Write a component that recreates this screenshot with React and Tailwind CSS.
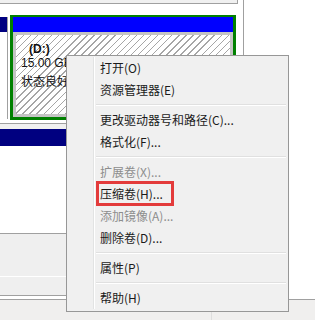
// Disk management view with the volume context menu open

const MENU = [
  { label: '打开(O)' },
  { label: '资源管理器(E)' },
  { sep: true },
  { label: '更改驱动器号和路径(C)...' },
  { label: '格式化(F)...' },
  { sep: true },
  { label: '扩展卷(X)...', disabled: true },
  { label: '压缩卷(H)...', marked: true },
  { label: '添加镜像(A)...', disabled: true },
  { label: '删除卷(D)...' },
  { sep: true },
  { label: '属性(P)' },
  { sep: true },
  { label: '帮助(H)' },
]

function MenuItem({ item }) {
  if (item.sep) {
    return (
      <div className="flex h-[8px]">
        <div className="w-[27px] h-full border-r border-[#e2e3e3] shadow-[1px_0_0_#ffffff]" />
        <div className="flex-1 ml-[2px] mr-[2px] mt-[3px] h-[2px] border-t border-[#e0e0e0] border-b border-b-white" />
      </div>
    )
  }
  return (
    <div className="relative flex h-[22px] items-center">
      <div className="w-[27px] h-full border-r border-[#e2e3e3] shadow-[1px_0_0_#ffffff]" />
      <span className={`pl-[6px] leading-[22px] whitespace-nowrap ${item.disabled ? 'text-[#8d8d8d]' : 'text-[#1b1b1b]'}`}>
        {item.label}
      </span>
      {item.marked && (
        <div className="absolute left-[29px] top-[-2px] w-[78px] h-[25px] border-[3px] border-[#e33b3b]" />
      )}
    </div>
  )
}

export default function App() {
  return (
    <div className="relative w-[315px] h-[320px] overflow-hidden bg-white text-[12px] font-['Liberation_Sans','Noto_Sans_CJK_SC',sans-serif]">
      <div className="flex h-[299px]">
        {/* disk list */}
        <div className="w-[244px] flex flex-col border-r border-[#a0a0a0] bg-white">
          <div className="flex h-[4px]">
            <div className="w-[238px] bg-[#f0f0f0] border-b border-r border-[#a0a0a0]" />
          </div>

          <div className="flex h-[119px] pt-[11px]">
            <div className="w-[8px] h-[102px] mt-[2px] border-r border-[#a0a0a0]">
              <div className="h-[15px] bg-[#000080]" />
            </div>
            <div className="ml-[2px] w-[226px] h-[105px] flex flex-col border-[#008000] border-x-[3px] border-t-2 border-b-[3px]">
              <div className="h-[15px] bg-[#0000ff]" />
              <div className="flex-1 border-[3px] border-[#c4c4c4] pl-[5px] pt-[7px] overflow-hidden text-[#111] bg-[repeating-linear-gradient(135deg,#a6a6a6_0px,#a6a6a6_1px,#ffffff_1px,#ffffff_5px)]">
                <div className="ml-[8px] font-bold leading-[14px]">(D:)</div>
                <div className="leading-[14px]">15.00 GB NTFS</div>
                <div className="mt-[5px] leading-[15px] whitespace-nowrap">状态良好 (主分区)</div>
              </div>
            </div>
          </div>

          <div className="border-t border-[#a0a0a0] bg-[#f0f0f0] pt-[5px]">
            <div className="h-[17px] bg-[#000080]" />
          </div>
          <div className="h-[87px] bg-white" />
          <div className="border-t border-[#a0a0a0] bg-[#efefef]">
            <div className="h-[43px] border-b border-white" />
            <div className="h-[18px]" />
          </div>
          <div className="h-[3px] border-t border-[#a0a0a0] bg-white" />
        </div>
        <div className="flex-1 bg-white" />
      </div>

      {/* status strip */}
      <div className="flex h-[21px] border-t border-[#a0a0a0] bg-[#f0efee]">
        <div className="w-[212px] border-r border-[#dedede]" />
      </div>

      {/* context menu */}
      <div className="absolute left-[66px] top-[55px] w-[223px] h-[257px] border border-[#979797] bg-[#f0f0f0] pt-[1px] pb-[2px] font-['Noto_Sans_CJK_SC','Liberation_Sans',sans-serif]">
        {MENU.map((item, i) => (
          <MenuItem key={i} item={item} />
        ))}
      </div>
    </div>
  )
}
